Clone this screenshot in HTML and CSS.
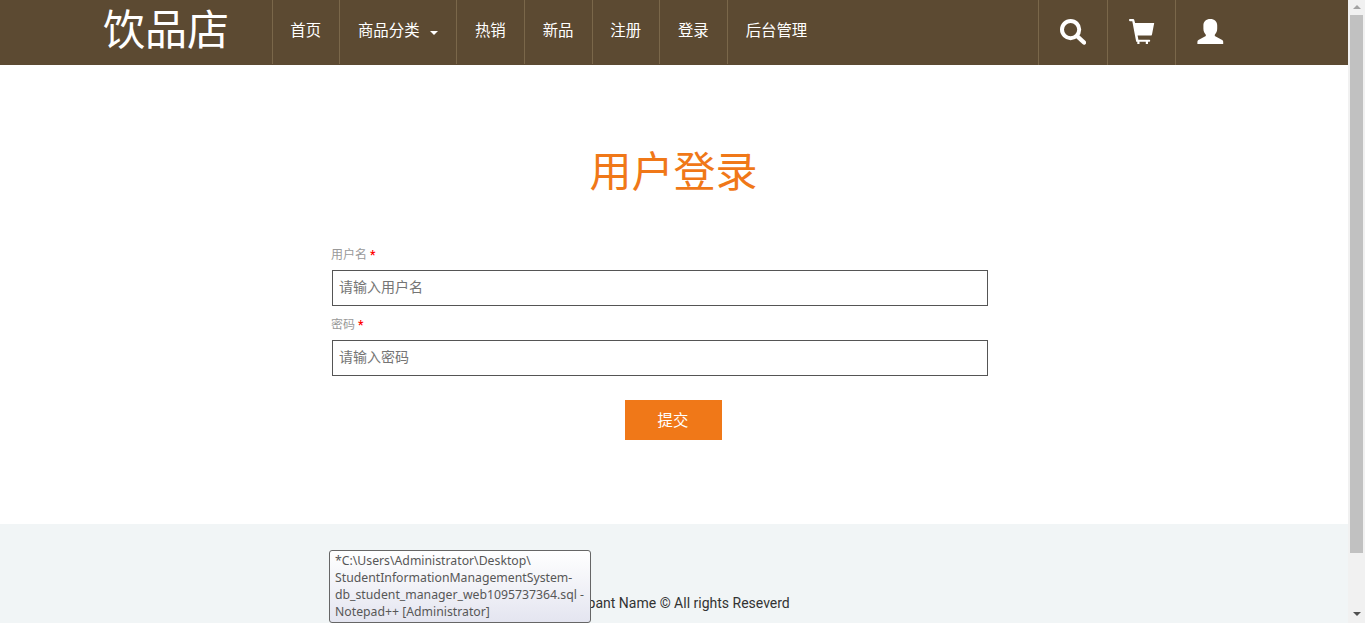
FILE: index.html
```html
<!DOCTYPE html>
<html lang="zh-CN">

<head>
    <meta charset="UTF-8">
    <title>用户登录</title>
    <link rel="stylesheet" href="styles.css">
</head>

<body>

    <div class="page">
        <header class="header">
            <h1 class="logo">饮品店</h1>
            <ul class="nav">
                <li><a>首页</a></li>
                <li class="dropdown"><a>商品分类 <span class="caret"></span></a></li>
                <li><a>热销</a></li>
                <li><a>新品</a></li>
                <li><a>注册</a></li>
                <li><a>登录</a></li>
                <li><a>后台管理</a></li>
            </ul>
            <div class="header-info">
                <a class="search">
                    <svg width="26" height="26" viewBox="0 0 26 26">
                        <circle cx="10.6" cy="10.6" r="8.6" fill="none" stroke="#fff" stroke-width="4"/>
                        <path d="M17.5 17.5L24 23.5" stroke="#fff" stroke-width="4.4" stroke-linecap="round"/>
                    </svg>
                </a>
                <a class="cart">
                    <svg width="26" height="26" viewBox="0 0 26 26" fill="#fff">
                        <path d="M.8 0H4.2Q5 0 5.2.8L6.1 4H25.2L23 15.4Q22.7 16.6 21.6 16.6H8.6L9.4 20.8H20.4Q21.2 20.8 21.2 21.8Q21.2 22.8 20.4 22.8H19V25H16.8V22.8H10.5V25H8.3V22.8H7.2L3.3 2.2H.8Q0 2.2 0 1.1Q0 0 .8 0Z"/>
                    </svg>
                </a>
                <a class="user">
                    <svg width="27" height="25" viewBox="0 0 27 25" fill="#fff">
                        <path d="M13.3 0C17.5 0 20.2 2.5 20.2 6.4V9.8C20.2 12.6 19 14.3 17.8 15.7V17L25.2 21Q26.2 21.7 26.2 22.8V25H.4V22.8Q.4 21.7 1.4 21L8.8 17V15.7C7.6 14.3 6.4 12.6 6.4 9.8V6.4C6.4 2.5 9.1 0 13.3 0Z"/>
                    </svg>
                </a>
            </div>
        </header>

        <main class="login">
            <h2>用户登录</h2>
            <form>
                <label for="name">用户名 <span>*</span></label>
                <input type="text" id="name" placeholder="请输入用户名">
                <label for="password">密码 <span>*</span></label>
                <input type="text" id="password" placeholder="请输入密码">
                <button type="button">提交</button>
            </form>
        </main>

        <footer>
            <p>Compant Name © All rights Reseverd</p>
            <div class="tooltip">*C:\Users\Administrator\Desktop\<br>StudentInformationManagementSystem-<br>db_student_manager_web1095737364.sql -<br>Notepad++ [Administrator]</div>
        </footer>
    </div>

    <div class="scrollbar">
        <span class="arrow-up"></span>
        <div class="thumb"></div>
        <span class="arrow-down"></span>
    </div>

</body>

</html>
```

FILE: styles.css
```css
* {
    box-sizing: border-box;
}

body {
    display: flex;
    height: 623px;
    margin: 0;
    overflow: hidden;
    background-color: #fff;
    font-family: Roboto, "Noto Sans CJK SC", sans-serif;
    font-size: 14px;
}

h1, h2, p, ul {
    margin: 0;
    padding: 0;
    font-weight: normal;
}

.page {
    display: flex;
    flex-direction: column;
    width: 1348px;
}

/* header */
.header {
    display: flex;
    height: 65px;
    padding-left: 103px;
    background-color: #5c4a32;
    color: #fff;
}

.logo {
    width: 168.6px;
    font-size: 42px;
    line-height: 61px;
}

.nav {
    display: flex;
    height: 64px;
    list-style: none;
}

.nav li {
    padding: 0 18.2px 0 17.7px;
    border-left: 1px solid #7a674a;
    font-size: 15.4px;
    line-height: 63px;
    white-space: nowrap;
}

.nav .dropdown {
    width: 117px;
}

.caret {
    display: inline-block;
    margin-left: 6.5px;
    border-top: 4px solid #fff;
    border-left: 4px solid transparent;
    border-right: 4px solid transparent;
    vertical-align: 1px;
}

.header-info {
    display: flex;
    margin-left: auto;
    margin-right: 104px;
}

.header-info a {
    width: 68px;
    padding: 19px 0 0 21px;
    border-left: 1px solid #7a674a;
}

.header-info .search {
    width: 69px;
}

.header-info .user {
    width: 69px;
    padding-left: 20.5px;
}

/* login form */
.login {
    height: 459px;
    padding-top: 76px;
}

.login h2 {
    margin-right: 1px;
    color: #f07818;
    font-size: 42px;
    line-height: 63px;
    text-align: center;
}

form {
    display: flex;
    flex-direction: column;
    width: 684px;
    margin: 41px auto 0;
}

label {
    height: 20px;
    margin: 0 0 5px -1px;
    color: #999;
    font-size: 12px;
    line-height: 20px;
}

label span {
    color: #f00;
    font-weight: bold;
}

input {
    width: 656px;
    height: 36px;
    margin: 0 0 9px;
    padding: 0 6px 2px;
    border: 1px solid #555;
    outline: none;
    font: inherit;
}

input::placeholder {
    color: #757575;
}

button {
    align-self: center;
    width: 97px;
    height: 40px;
    margin: 15px 2px 0 0;
    padding-bottom: 3px;
    border: none;
    background-color: #f07818;
    color: #fff;
    font: inherit;
    font-size: 15.4px;
}

/* footer */
footer {
    position: relative;
    height: 99px;
    padding-top: 69px;
    background-color: #f1f5f6;
    color: #333;
    line-height: 20px;
    text-align: center;
}

.tooltip {
    position: absolute;
    top: 26px;
    left: 329px;
    width: 262px;
    height: 73px;
    padding: 1px 5px;
    border: 1px solid #666;
    border-radius: 3px;
    background: linear-gradient(#fff, #e4e5f0);
    color: #575757;
    font-family: "Noto Sans", sans-serif;
    font-size: 12.25px;
    line-height: 17px;
    text-align: left;
    white-space: nowrap;
}

/* scrollbar */
.scrollbar {
    display: flex;
    flex-direction: column;
    align-items: center;
    width: 17px;
    background-color: #f1f1f1;
}

.arrow-up {
    margin: 5px 0 6px;
    border: 4px solid transparent;
    border-top: 0;
    border-bottom-color: #a3a3a3;
}

.thumb {
    width: 13px;
    height: 538px;
    background-color: #c1c1c1;
}

.arrow-down {
    margin-top: auto;
    margin-bottom: 7px;
    border: 4px solid transparent;
    border-bottom: 0;
    border-top-color: #505050;
}
```
